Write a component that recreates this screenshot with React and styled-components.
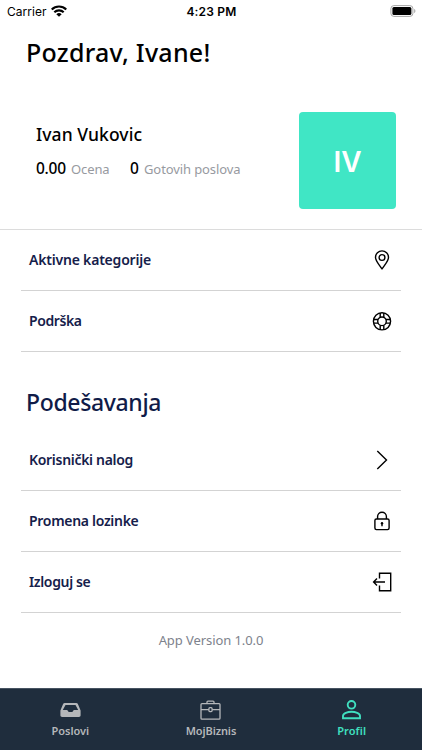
import React from 'react'
import styled, { createGlobalStyle } from 'styled-components'

const GlobalStyle = createGlobalStyle`
  * {
    box-sizing: border-box;
  }
  body {
    margin: 0;
    background: #ffffff;
    font-family: "Noto Sans", "Open Sans", sans-serif;
  }
  svg {
    display: block;
  }
`

const Screen = styled.div`
  width: 422px;
  height: 750px;
  display: flex;
  flex-direction: column;
  background: #ffffff;
  color: #000000;
  overflow: hidden;
  white-space: nowrap;
`

const StatusBar = styled.div`
  height: 22px;
  padding: 0 6px 0 7px;
  display: grid;
  grid-template-columns: 1fr auto 1fr;
  align-items: center;
  font-family: Inter, "Liberation Sans", sans-serif;
  font-size: 12px;
`

const Carrier = styled.div`
  display: flex;
  align-items: center;
  gap: 4px;
  letter-spacing: 0.05px;
`

const Time = styled.div`
  font-weight: 600;
  letter-spacing: 0.2px;
`

const Battery = styled.div`
  justify-self: end;
  margin-top: -1px;
`

const Title = styled.h1`
  margin: 0;
  height: 60px;
  padding-left: 26px;
  font-size: 25px;
  font-weight: 500;
  line-height: 60px;
  letter-spacing: 0.25px;
`

const Profile = styled.section`
  height: 148px;
  padding: 30px 26px 0 36px;
  display: flex;
  justify-content: space-between;
  border-bottom: 1px solid #dcdcdc;
`

const Name = styled.h2`
  margin: 11px 0 0;
  font-size: 17.5px;
  font-weight: 500;
  line-height: 22px;
  letter-spacing: 0.08px;
`

const Stats = styled.div`
  margin-top: 12px;
  display: flex;
  align-items: baseline;
  line-height: 22px;
`

const Value = styled.span`
  width: ${props => props.$width};
  font-size: 15.5px;
  font-weight: 500;
  letter-spacing: -0.25px;
`

const Label = styled.span`
  width: ${props => props.$width};
  font-size: 13px;
  color: #979a9f;
  letter-spacing: -0.1px;
`

const Avatar = styled.div`
  width: 97px;
  height: 97px;
  padding-top: 2px;
  display: flex;
  align-items: center;
  justify-content: center;
  border-radius: 4px;
  background: #40e6c5;
  color: #ffffff;
  font-family: Inter, "Liberation Sans", sans-serif;
  font-size: 28px;
  font-weight: 600;
`

const List = styled.div`
  padding: 0 21px;
`

const Row = styled.div`
  height: 61px;
  padding: 0 8px;
  display: flex;
  align-items: center;
  justify-content: space-between;
  border-bottom: 1px solid #d3d3d3;
  color: #15204a;
  font-size: 14px;
  font-weight: 600;
  line-height: 20px;
  letter-spacing: ${props => props.$spacing};
`

const IconBox = styled.div`
  width: 22px;
  height: 22px;
  color: #000000;
`

const SectionTitle = styled.h2`
  margin: 0;
  height: 78px;
  padding: 12px 26px 0;
  color: #101b48;
  font-size: 23px;
  font-weight: 500;
  line-height: 76px;
  letter-spacing: -0.35px;
`

const Version = styled.div`
  flex: 1;
  padding-top: 17px;
  text-align: center;
  color: #7d828c;
  font-size: 13px;
  line-height: 20px;
  letter-spacing: -0.08px;
`

const TabBar = styled.nav`
  height: 62px;
  display: grid;
  grid-template-columns: repeat(3, 1fr);
  border-top: 1px solid #465361;
  background: #1f2d3d;
`

const Tab = styled.div`
  display: flex;
  flex-direction: column;
  align-items: center;
  padding-top: 9px;
  color: ${props => (props.$active ? '#40e0c0' : '#b5b7ba')};
  font-size: 11px;
  font-weight: 600;
  line-height: 16px;
  letter-spacing: ${props => props.$spacing || '0'};
`

const TabIcon = styled.div`
  height: 25px;
`

const Line = ({ children, width = 1.4 }) => (
  <svg width="22" height="22" viewBox="0 0 22 22" fill="none" stroke="currentColor" strokeWidth={width}>
    {children}
  </svg>
)

const WifiIcon = () => (
  <svg width="16" height="12" viewBox="0 0 15 11" fill="none" stroke="#000" strokeWidth="2">
    <path d="M.7 4.1a9.6 9.6 0 0 1 13.6 0M3.1 6.7a6.2 6.2 0 0 1 8.8 0" />
    <path d="M7.5 11 5 8.6a3.6 3.6 0 0 1 5 0z" fill="#000" stroke="none" />
  </svg>
)

const BatteryIcon = () => (
  <svg width="26" height="12" viewBox="0 0 26 12">
    <rect x=".9" y=".6" width="22" height="10.8" rx="3" fill="none" stroke="#a6a6a6" />
    <rect x="2.4" y="2" width="19" height="8" rx="1.5" />
    <path d="M24.2 4v4c.8-.3 1.2-1.1 1.2-2S25 4.3 24.2 4z" fill="#a6a6a6" />
  </svg>
)

const PinIcon = () => (
  <Line>
    <path d="M11 20C8.5 16 4.500 11.900 4.500 8.400a6.500 6.500 0 0 1 13 0C17.500 11.900 13.500 16 11 20z" strokeLinejoin="round" />
    <circle cx="11" cy="8.500" r="2.900" />
  </Line>
)

const SupportIcon = () => (
  <Line width={1.4}>
    <circle cx="11" cy="11.300" r="8.600" />
    <circle cx="11" cy="11.300" r="4.300" />
    <path d="M9.200 2.900v4.500M12.800 2.900v4.500M9.200 15.200v4.500M12.800 15.200v4.500M2.600 9.500h4.500M2.600 13.100h4.500M14.900 9.500h4.500M14.900 13.100h4.500" />
  </Line>
)

const ChevronIcon = () => (
  <Line>
    <path d="m6.300 2 9.200 9-9.200 9" />
  </Line>
)

const LockIcon = () => (
  <Line>
    <rect x="3.900" y="9" width="14.200" height="10.600" rx="1.500" />
    <path d="M6.600 9V6.600a4.400 4.400 0 0 1 8.800 0V9" />
    <circle cx="11" cy="13.200" r="1.200" fill="currentColor" stroke="none" />
    <path d="M11 13v3.200" />
  </Line>
)

const LogoutIcon = () => (
  <Line>
    <path d="M8.500 7.500V2.300h11.200v17.400H8.500v-5.200M14 11H2.500M6 7.600 2.600 11 6 14.400" />
  </Line>
)

const InboxIcon = () => (
  <svg width="21" height="25" viewBox="0 0 21 25">
    <path
      fill="currentColor"
      fillRule="evenodd"
      d="M4.800 5h11.400c.8 0 1.400.4 1.700 1.100l2.700 6.400v4.700c0 1-.7 1.700-1.700 1.700H2.100c-1 0-1.700-.7-1.700-1.700v-4.700l2.700-6.400C3.400 5.400 4 5 4.800 5zm.7 1.900-2.700 5.200h4.400l1.500 1.900h3.600l1.500-1.900h4.400l-2.700-5.200z"
    />
  </svg>
)

const BriefcaseIcon = () => (
  <svg width="21" height="25" viewBox="0 0 21 25" fill="none" stroke="currentColor" strokeWidth="1.300">
    <rect x="1" y="5.600" width="19" height="15.600" rx="1" />
    <path d="M7 5.600V4.100c0-.6.400-1 1-1h5c.6 0 1 .4 1 1v1.500M1 11.600h7.900M12.100 11.600H20" />
    <rect x="8.900" y="9.700" width="3.200" height="3.900" rx="1" />
  </svg>
)

const PersonIcon = () => (
  <svg width="21" height="25" viewBox="0 0 21 25" fill="none" stroke="currentColor" strokeWidth="1.900">
    <circle cx="10.500" cy="6.800" r="3.800" />
    <path d="M2 20.200v-2.300c0-2.700 4.800-4.200 8.500-4.200s8.500 1.500 8.500 4.200v2.300z" />
  </svg>
)

const Item = ({ label, icon, spacing }) => (
  <Row $spacing={spacing}>
    {label}
    <IconBox>{icon}</IconBox>
  </Row>
)

export default () => (
  <Screen>
    <GlobalStyle />
    <StatusBar>
      <Carrier>
        Carrier
        <WifiIcon />
      </Carrier>
      <Time>4:23 PM</Time>
      <Battery><BatteryIcon /></Battery>
    </StatusBar>

    <Title>Pozdrav, Ivane!</Title>

    <Profile>
      <div>
        <Name>Ivan Vukovic</Name>
        <Stats>
          <Value $width="35px">0.00</Value>
          <Label $width="59px">Ocena</Label>
          <Value $width="14px">0</Value>
          <Label>Gotovih poslova</Label>
        </Stats>
      </div>
      <Avatar>IV</Avatar>
    </Profile>

    <List>
      <Item label="Aktivne kategorije" icon={<PinIcon />} spacing="-0.2px" />
      <Item label="Podrška" icon={<SupportIcon />} spacing="-0.4px" />
    </List>

    <SectionTitle>Podešavanja</SectionTitle>

    <List>
      <Item label="Korisnički nalog" icon={<ChevronIcon />} spacing="-0.3px" />
      <Item label="Promena lozinke" icon={<LockIcon />} spacing="-0.3px" />
      <Item label="Izloguj se" icon={<LogoutIcon />} spacing="-0.35px" />
    </List>

    <Version>App Version 1.0.0</Version>

    <TabBar>
      <Tab>
        <TabIcon><InboxIcon /></TabIcon>
        Poslovi
      </Tab>
      <Tab $spacing="-0.1px">
        <TabIcon><BriefcaseIcon /></TabIcon>
        MojBiznis
      </Tab>
      <Tab $active $spacing="0.1px">
        <TabIcon><PersonIcon /></TabIcon>
        Profil
      </Tab>
    </TabBar>
  </Screen>
)
